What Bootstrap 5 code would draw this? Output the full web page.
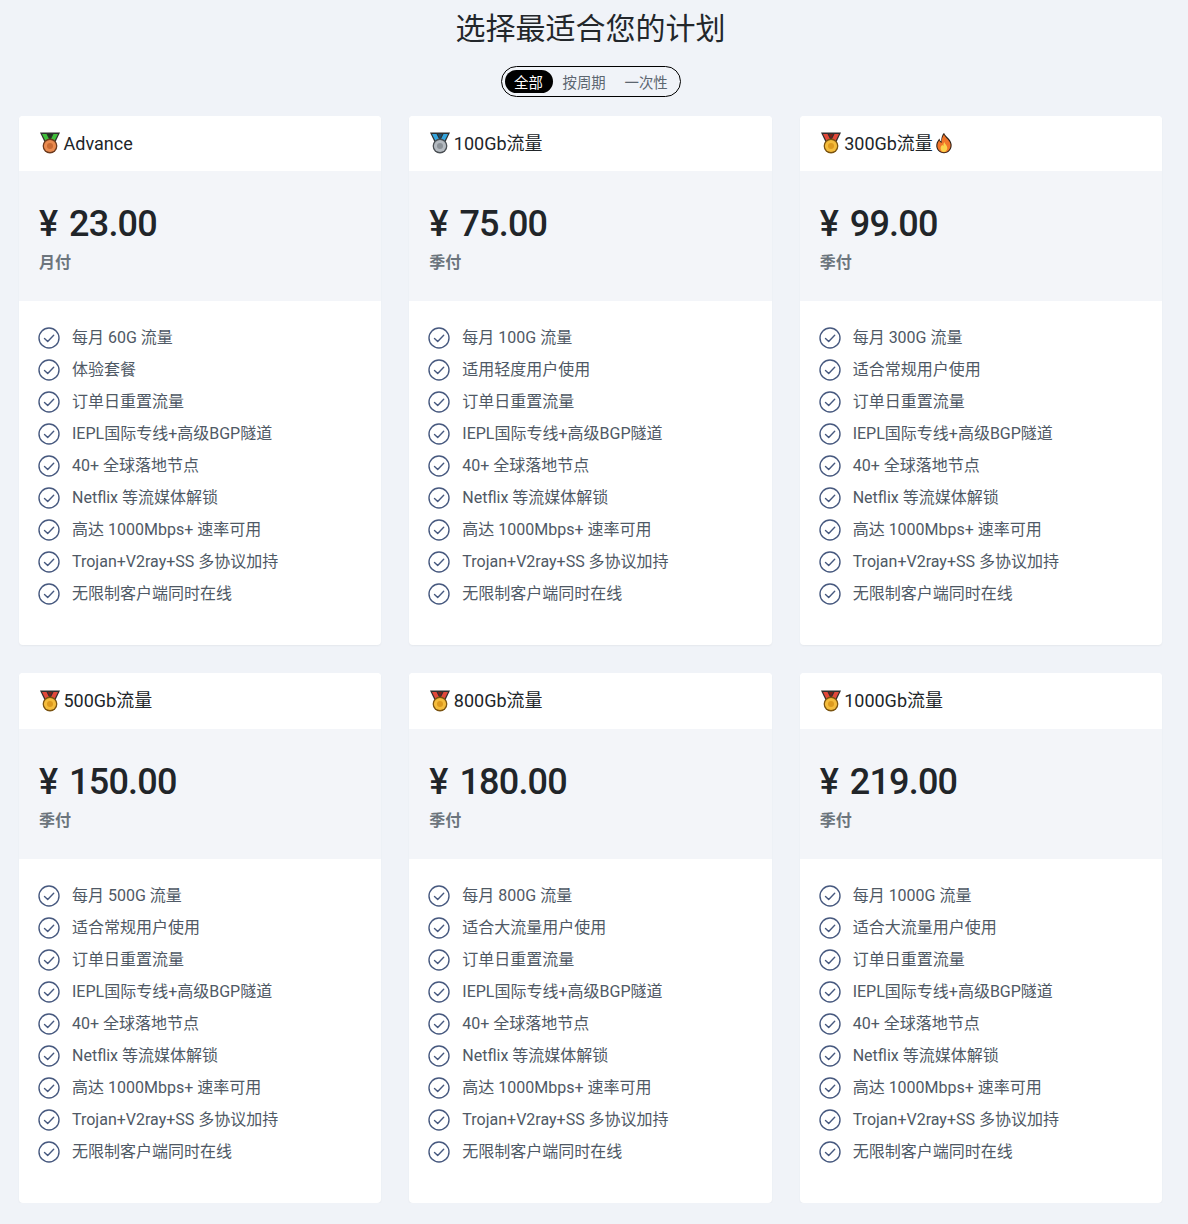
<!DOCTYPE html>
<html lang="zh">
<head>
<meta charset="utf-8">
<title>选择最适合您的计划</title>
<link href="https://cdn.jsdelivr.net/npm/bootstrap@5.3.0/dist/css/bootstrap.min.css" rel="stylesheet">
<style>
html,body{background:#f0f3f8;}
body{font-family:Roboto,"Noto Sans CJK SC",sans-serif;color:#212529;font-size:14.4px;}
.page-wrap{padding:0 26px 0 19px;}
.plan-title{font-size:30px;font-weight:400;line-height:36px;color:#23272b;margin:8px 0 22px;font-family:"Noto Sans CJK SC",sans-serif;text-align:center;}
.period-toggle{width:180px;height:31px;border:1px solid #000;border-radius:16px;padding:3px;margin-bottom:18.5px;font-size:14.4px;font-family:"Noto Sans CJK SC",sans-serif;}
.period-item{color:#5c6670;line-height:23px;height:23px;white-space:nowrap;}
.period-on{background:#000;color:#fff;border-radius:12px;width:48px;text-align:center;}
.period-b{margin-left:10px;width:44px;}
.period-c{margin-left:18px;width:44px;}
.plan-row{--bs-gutter-x:28px;--bs-gutter-y:28px;}
.plan-card{border:0;border-radius:4px;background:#fff;box-shadow:0 1px 2px rgba(56,65,74,.06);height:529.5px;overflow:hidden;}
.plan-head{height:55.5px;padding:0 20px;font-size:18px;gap:2.5px;background:#fff;color:#212529;}
.plan-head svg{flex:none;}
.plan-price{height:130px;background:#f3f5f9;padding:31.25px 20px 0;}
.price-num{font-size:36px;font-weight:500;line-height:44px;letter-spacing:-.8px;word-spacing:3.6px;color:#212529;margin:0;}
.price-unit{font-size:16px;font-weight:700;color:#6c757d;line-height:24px;margin-top:3px;font-family:"Noto Sans CJK SC",sans-serif;}
.plan-feat{padding:21px 20px 0 19px;list-style:none;margin:0;}
.plan-feat li{height:32px;color:#4f5965;font-size:16px;gap:12px;white-space:nowrap;}
.plan-feat svg{flex:none;}
</style>
</head>
<body>
<svg width="0" height="0" class="d-block position-absolute">
  <defs>
    <symbol id="ok" viewBox="0 0 22 22">
      <circle cx="11" cy="11" r="10" fill="none" stroke="#47597f" stroke-width="1.4"/>
      <path d="M6.500 11.400l3.200 3.100 6-6.200" fill="none" stroke="#47597f" stroke-width="1.4" stroke-linecap="round" stroke-linejoin="round"/>
    </symbol>
    <symbol id="m3" viewBox="0 0 22 22">
      <path d="M1 .5h20l-5.500 11.500h-9z" fill="#2f2f2f"/>
      <path d="M3 2h4.500l3.500 7 3.500-7h4.500l-4.500 9h-7z" fill="#3fbf3a"/>
      <path d="M8.700 2h4.600l-2.300 4.500z" fill="#1d3a1d"/>
      <circle cx="11" cy="14" r="7.400" fill="#6b3a1e"/>
      <circle cx="11" cy="14" r="6.100" fill="#e98a4f"/>
      <circle cx="11" cy="14" r="3" fill="#c96a32"/>
    </symbol>
    <symbol id="m2" viewBox="0 0 22 22">
      <path d="M1 .5h20l-5.500 11.500h-9z" fill="#2f2f2f"/>
      <path d="M3 2h4.500l3.500 7 3.500-7h4.500l-4.500 9h-7z" fill="#35a5dd"/>
      <path d="M8.700 2h4.600l-2.300 4.500z" fill="#1b4f70"/>
      <circle cx="11" cy="14" r="7.400" fill="#4a4f54"/>
      <circle cx="11" cy="14" r="6.100" fill="#b4bac0"/>
      <circle cx="11" cy="14" r="3" fill="#8b9298"/>
    </symbol>
    <symbol id="m1" viewBox="0 0 22 22">
      <path d="M1 .5h20l-5.500 11.500h-9z" fill="#2f2f2f"/>
      <path d="M3 2h4.500l3.500 7 3.500-7h4.500l-4.500 9h-7z" fill="#e2483a"/>
      <path d="M8.700 2h4.600l-2.300 4.500z" fill="#7d1f18"/>
      <circle cx="11" cy="14" r="7.400" fill="#7a5310"/>
      <circle cx="11" cy="14" r="6.100" fill="#f4bc3c"/>
      <circle cx="11" cy="14" r="3" fill="#dd9a1e"/>
    </symbol>
    <symbol id="fire" viewBox="0 0 18 22">
      <path d="M9 .8c1 3.600 6.800 6 7.600 11.400.6 4.900-3 9-7.600 9s-8.200-3.700-7.700-8.500c.3-2.900 1.900-4.500 3.200-6.300.3 1.500.8 2.500 1.800 3.200C6 6.500 7 3 9 .8z" fill="#2e2118"/>
      <path d="M9 2.500c1 3.200 6 5.500 6.500 9.900.5 4.100-2.500 7.800-6.500 7.800s-7-3.200-6.600-7.300c.2-2 1.100-3.400 2-4.600.4 1.300 1 2.100 2.200 2.800C6.400 7.600 7.500 4.600 9 2.500z" fill="#f0762a"/>
      <path d="M9.300 10c.5 2 3 3.200 3 6 0 2.200-1.600 4-3.400 4s-3.300-1.700-3.300-3.800c0-1.700 1-2.600 1.700-3.500.3.700.6 1 1.100 1.300-.1-1.500.2-2.900.9-4z" fill="#fbd24c"/>
    </symbol>
  </defs>
</svg>
<div class="page-wrap">
  <h1 class="plan-title">选择最适合您的计划</h1>
  <div class="d-flex justify-content-center">
    <div class="period-toggle d-flex align-items-center">
      <div class="period-item period-on">全部</div>
      <div class="period-item period-b">按周期</div>
      <div class="period-item period-c">一次性</div>
    </div>
  </div>
  <div class="row plan-row" id="plans"></div>
</div>
<script>
var plans=[
 ["m3","Advance",0,"23.00","月付","每月 60G 流量","体验套餐"],
 ["m2","100Gb流量",0,"75.00","季付","每月 100G 流量","适用轻度用户使用"],
 ["m1","300Gb流量",1,"99.00","季付","每月 300G 流量","适合常规用户使用"],
 ["m1","500Gb流量",0,"150.00","季付","每月 500G 流量","适合常规用户使用"],
 ["m1","800Gb流量",0,"180.00","季付","每月 800G 流量","适合大流量用户使用"],
 ["m1","1000Gb流量",0,"219.00","季付","每月 1000G 流量","适合大流量用户使用"]
];
var common=["订单日重置流量","IEPL国际专线+高级BGP隧道","40+ 全球落地节点","Netflix 等流媒体解锁","高达 1000Mbps+ 速率可用","Trojan+V2ray+SS 多协议加持","无限制客户端同时在线"];
var h="";
plans.forEach(function(p){
  var items=[p[5],p[6]].concat(common).map(function(t){
    return '<li class="d-flex align-items-center"><svg width="22" height="22"><use href="#ok"/></svg><span>'+t+'</span></li>';
  }).join("");
  h+='<div class="col-4"><div class="plan-card d-flex flex-column">'
   +'<div class="plan-head d-flex align-items-center"><svg width="22" height="22"><use href="#'+p[0]+'"/></svg><span>'+p[1]+'</span>'
   +(p[2]?'<svg width="18" height="22"><use href="#fire"/></svg>':'')+'</div>'
   +'<div class="plan-price"><div class="price-num">¥ '+p[3]+'</div><div class="price-unit">'+p[4]+'</div></div>'
   +'<ul class="plan-feat">'+items+'</ul></div></div>';
});
document.getElementById("plans").innerHTML=h;
</script>
<script src="https://cdn.jsdelivr.net/npm/bootstrap@5.3.0/dist/js/bootstrap.bundle.min.js"></script>
</body>
</html>
